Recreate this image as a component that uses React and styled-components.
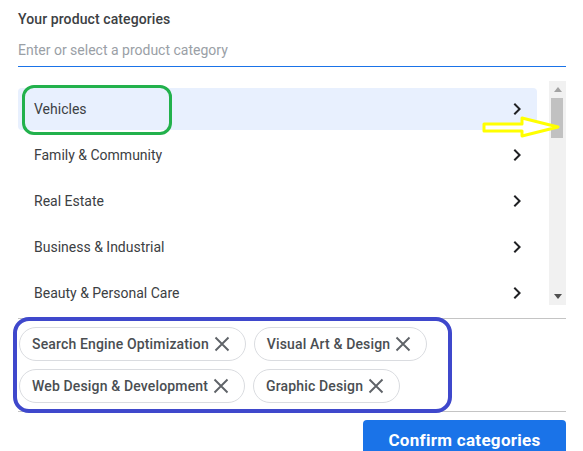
import React from "react";
import styled, { createGlobalStyle } from "styled-components";

const GlobalStyle = createGlobalStyle`
    html, body {
        margin: 0;
        padding: 0;
        background: #ffffff;
        font-family: Roboto, "Liberation Sans", Arial, sans-serif;
    }
`;

const categories = [
    "Vehicles",
    "Family & Community",
    "Real Estate",
    "Business & Industrial",
    "Beauty & Personal Care",
    "Home & Garden",
];

const selected = [
    "Search Engine Optimization",
    "Visual Art & Design",
    "Web Design & Development",
    "Graphic Design",
];

function Chevron() {
    return (
        <svg width="24" height="24" viewBox="0 0 24 24">
            <path d="M10 6L8.59 7.41 13.17 12l-4.58 4.59L10 18l6-6z" fill="#202124" />
        </svg>
    );
}

function CloseIcon() {
    return (
        <svg width="24" height="24" viewBox="0 0 24 24">
            <path d="M5.5 5.5l13 13M18.5 5.5l-13 13" stroke="#5f6368" strokeWidth="1.9" fill="none" />
        </svg>
    );
}

export default function App() {
    return (
        <Page>
            <GlobalStyle />
            <Title>Your product categories</Title>
            <SearchField>Enter or select a product category</SearchField>
            <ListArea>
                <List>
                    {categories.map((c, i) => (
                        <Row key={c} $active={i === 0}>
                            <span>{c}</span>
                            <Chevron />
                        </Row>
                    ))}
                </List>
                <ScrollBar>
                    <ScrollArrow $up>
                        <svg width="8" height="5" viewBox="0 0 8 5"><path d="M0 5L4 0L8 5z" fill="#a3a3a3" /></svg>
                    </ScrollArrow>
                    <Thumb />
                    <ScrollSpace />
                    <ScrollArrow>
                        <svg width="8" height="5" viewBox="0 0 8 5"><path d="M0 0L8 0L4 5z" fill="#505050" /></svg>
                    </ScrollArrow>
                </ScrollBar>
            </ListArea>
            <ChipArea>
                {selected.map((s) => (
                    <Chip key={s}>
                        {s}
                        <CloseIcon />
                    </Chip>
                ))}
            </ChipArea>
            <Footer>
                <ConfirmButton>Confirm categories</ConfirmButton>
            </Footer>

            <GreenMark />
            <BlueMark />
            <ArrowMark width="80" height="22" viewBox="0 0 80 22">
                <polygon
                    points="2,8 40,8 40,2 76,11 40,20 40,15 2,15"
                    fill="#ffffff"
                    stroke="#ffff00"
                    strokeWidth="3"
                    strokeLinejoin="round"
                />
            </ArrowMark>
        </Page>
    );
}

const Page = styled.div`
    position: relative;
    width: 583px;
    height: 451px;
    overflow: hidden;
    box-sizing: border-box;
    padding: 9px 17px 0 18px;
`;

const Title = styled.div`
    font-size: 14px;
    line-height: 20px;
    font-weight: 500;
    color: #3c4043;
    letter-spacing: 0.1px;
`;

const SearchField = styled.div`
    font-size: 14px;
    line-height: 20px;
    color: #9aa0a6;
    padding: 11px 0 6px;
    border-bottom: 1px solid #1a73e8;
`;

const ListArea = styled.div`
    display: flex;
    height: 224px;
    margin-top: 14px;
`;

const List = styled.div`
    flex: 1;
    overflow: hidden;
    padding: 7px 12px 0 0;
`;

const Row = styled.div`
    display: flex;
    align-items: center;
    justify-content: space-between;
    height: 42px;
    margin-bottom: 4px;
    padding: 0 8px 0 16px;
    border-radius: 4px;
    font-size: 14px;
    color: #3c4043;
    background: ${(p) => (p.$active ? "#e8f0fe" : "transparent")};
`;

const ScrollBar = styled.div`
    display: flex;
    flex-direction: column;
    width: 17px;
    background: #f1f1f1;
`;

const ScrollArrow = styled.div`
    display: flex;
    align-items: center;
    justify-content: center;
    height: 17px;
    padding-top: ${(p) => (p.$up ? "0" : "1px")};
`;

const Thumb = styled.div`
    height: 40px;
    margin: 0 3px 0 2px;
    background: #c1c1c1;
`;

const ScrollSpace = styled.div`
    flex: 1;
`;

const ChipArea = styled.div`
    display: flex;
    flex-wrap: wrap;
    gap: 8px 8px;
    margin-top: 13px;
    padding: 8px 0 8px 1px;
    border-top: 1px solid #c4c4c4;
    border-bottom: 1px solid #c4c4c4;
`;

const Chip = styled.div`
    display: flex;
    align-items: center;
    box-sizing: border-box;
    height: 34px;
    padding: 0 11px 0 12px;
    border: 1px solid #dadce0;
    border-radius: 17px;
    font-size: 14px;
    font-weight: 500;
    letter-spacing: 0.15px;
    color: #4a4e52;
    svg {
        margin-left: 1px;
    }
`;

const Footer = styled.div`
    display: flex;
    justify-content: flex-end;
    margin-top: 8px;
`;

const ConfirmButton = styled.button`
    height: 40px;
    width: 203px;
    border: none;
    border-radius: 4px;
    background: #1a73e8;
    color: #ffffff;
    font-family: Roboto, "Liberation Sans", Arial, sans-serif;
    font-size: 17px;
    font-weight: 700;
    letter-spacing: 0.3px;
`;

const GreenMark = styled.div`
    position: absolute;
    left: 22px;
    top: 85px;
    width: 150px;
    height: 50px;
    box-sizing: border-box;
    border: 3.5px solid #22b14c;
    border-radius: 12px;
`;

const BlueMark = styled.div`
    position: absolute;
    left: 13px;
    top: 317px;
    width: 439px;
    height: 96px;
    box-sizing: border-box;
    border: 4px solid #3f48cc;
    border-radius: 16px;
`;

const ArrowMark = styled.svg`
    position: absolute;
    left: 482px;
    top: 116px;
`;
